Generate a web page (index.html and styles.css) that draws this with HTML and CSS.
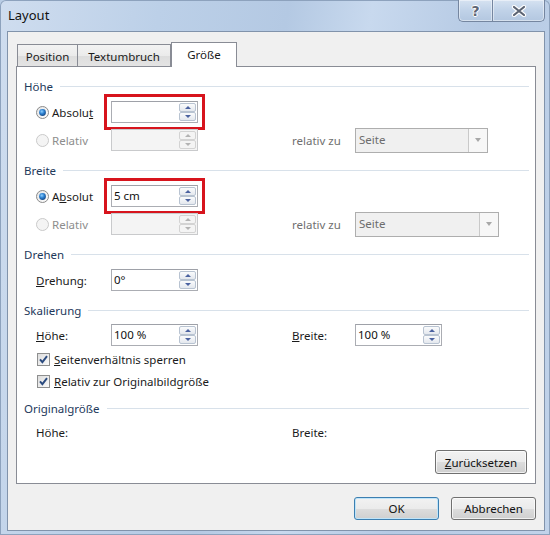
FILE: index.html
```html
<!DOCTYPE html>
<html lang="de">
<head>
<meta charset="utf-8">
<title>Layout</title>
<link rel="stylesheet" href="styles.css">
</head>
<body>
<div class="window">
  <div class="titlebar">
    <span class="title">Layout</span>
    <div class="caption">
      <span class="cbtn help">?</span>
      <span class="cbtn close"><svg width="16" height="12" viewBox="0 0 16 12"><path d="M3 2 L13 10 M13 2 L3 10" stroke="#fff" stroke-width="4.2" stroke-linecap="round"/><path d="M3 2 L13 10 M13 2 L3 10" stroke="#5b6372" stroke-width="2.2" stroke-linecap="round"/></svg></span>
    </div>
  </div>
  <div class="client">
    <div class="tabs">
      <div class="tab t1">Position</div>
      <div class="tab t2">Textumbruch</div>
      <div class="tab t3 active">Größe</div>
    </div>
    <div class="panel">
      <div class="group">
        <div class="ghead"><span>Höhe</span></div>
        <div class="row">
          <span class="opt"><svg class="radio" width="13" height="13" viewBox="0 0 13 13"><defs><radialGradient id="rb" cx="0.4" cy="0.35" r="0.7"><stop offset="0" stop-color="#8fd0ff"/><stop offset="0.5" stop-color="#2a7fd0"/><stop offset="1" stop-color="#17457f"/></radialGradient><linearGradient id="rw" x1="0" y1="0" x2="1" y2="1"><stop offset="0" stop-color="#e4e4e4"/><stop offset="1" stop-color="#ffffff"/></linearGradient></defs><circle cx="6.5" cy="6.5" r="6" fill="url(#rw)" stroke="#8a8a8a"/><circle cx="6.5" cy="6.5" r="3.4" fill="url(#rb)"/></svg><span>Absolu<u>t</u></span></span>
          <span class="hl"><span class="spin"><span class="val"></span><span class="arrows"><span class="ab up"></span><span class="ab dn"></span></span></span></span>
        </div>
        <div class="row">
          <span class="opt dis"><svg class="radio" width="13" height="13" viewBox="0 0 13 13"><circle cx="6.5" cy="6.5" r="6" fill="#f4f4f4" stroke="#c9c9c9"/></svg><span>Relativ</span></span>
          <span class="spin off"><span class="val"></span><span class="arrows"><span class="ab up"></span><span class="ab dn"></span></span></span>
          <span></span>
          <span class="lbl dis">relativ zu</span>
          <span class="select s1"><span class="sv">Seite</span><span class="sdrop"></span></span>
        </div>
      </div>
      <div class="group">
        <div class="ghead"><span>Breite</span></div>
        <div class="row">
          <span class="opt"><svg class="radio" width="13" height="13" viewBox="0 0 13 13"><circle cx="6.5" cy="6.5" r="6" fill="url(#rw)" stroke="#8a8a8a"/><circle cx="6.5" cy="6.5" r="3.4" fill="url(#rb)"/></svg><span>A<u>b</u>solut</span></span>
          <span class="hl"><span class="spin"><span class="val">5 cm</span><span class="arrows"><span class="ab up"></span><span class="ab dn"></span></span></span></span>
        </div>
        <div class="row">
          <span class="opt dis"><svg class="radio" width="13" height="13" viewBox="0 0 13 13"><circle cx="6.5" cy="6.5" r="6" fill="#f4f4f4" stroke="#c9c9c9"/></svg><span>Relativ</span></span>
          <span class="spin off"><span class="val"></span><span class="arrows"><span class="ab up"></span><span class="ab dn"></span></span></span>
          <span></span>
          <span class="lbl dis">relativ zu</span>
          <span class="select s2"><span class="sv">Seite</span><span class="sdrop"></span></span>
        </div>
      </div>
      <div class="group">
        <div class="ghead"><span>Drehen</span></div>
        <div class="row">
          <span class="lbl"><u>D</u>rehung:</span>
          <span class="spin"><span class="val">0°</span><span class="arrows"><span class="ab up"></span><span class="ab dn"></span></span></span>
        </div>
      </div>
      <div class="group">
        <div class="ghead"><span>Skalierung</span></div>
        <div class="row r26">
          <span class="lbl"><u>H</u>öhe:</span>
          <span class="spin"><span class="val">100 %</span><span class="arrows"><span class="ab up"></span><span class="ab dn"></span></span></span>
          <span></span>
          <span class="lbl"><u>B</u>reite:</span>
          <span class="spin"><span class="val">100 %</span><span class="arrows"><span class="ab up"></span><span class="ab dn"></span></span></span>
        </div>
        <div class="check"><svg width="13" height="13" viewBox="0 0 13 13"><defs><linearGradient id="cw" x1="0" y1="0" x2="1" y2="1"><stop offset="0" stop-color="#dcdcdc"/><stop offset="1" stop-color="#fbfbfb"/></linearGradient></defs><rect x="0.5" y="0.5" width="12" height="12" fill="url(#cw)" stroke="#8e8f8f"/><path d="M3 6.3 L5.4 9.2 L10 3.2" fill="none" stroke="#2b4b7f" stroke-width="1.9"/></svg><span><u>S</u>eitenverhältnis sperren</span></div>
        <div class="check"><svg width="13" height="13" viewBox="0 0 13 13"><rect x="0.5" y="0.5" width="12" height="12" fill="url(#cw)" stroke="#8e8f8f"/><path d="M3 6.3 L5.4 9.2 L10 3.2" fill="none" stroke="#2b4b7f" stroke-width="1.9"/></svg><span><u>R</u>elativ zur Originalbildgröße</span></div>
      </div>
      <div class="group last">
        <div class="ghead"><span>Originalgröße</span></div>
        <div class="row r24">
          <span class="lbl">Höhe:</span>
          <span></span>
          <span></span>
          <span class="lbl">Breite:</span>
        </div>
        <div class="panel-btns">
          <button class="btn reset"><u>Z</u>urücksetzen</button>
        </div>
      </div>
    </div>
    <div class="footer">
      <button class="btn default">OK</button>
      <button class="btn">Abbrechen</button>
    </div>
  </div>
</div>
</body>
</html>
```

FILE: styles.css
```css
html, body {
  margin: 0;
  padding: 0;
}
body {
  width: 550px;
  height: 535px;
  overflow: hidden;
  font-family: "Noto Sans", "Open Sans", sans-serif;
  font-size: 11.5px;
  color: #1b1b1b;
  background: #b9cde5;
}
u {
  text-decoration: underline;
  text-underline-offset: 1px;
}
.window {
  box-sizing: border-box;
  width: 550px;
  height: 535px;
  padding: 0 5px 4px 7px;
  display: flex;
  flex-direction: column;
  background: linear-gradient(100deg, #cfddef 0%, #bcd0e8 25%, #b4c9e3 45%, #c8d9ee 58%, #b6cae4 75%, #c1d3ea 100%);
  border-radius: 6px 6px 0 0;
  box-shadow: inset 0 0 0 1px #8da2bd;
}
.titlebar {
  height: 31px;
  display: flex;
  align-items: flex-start;
  flex-shrink: 0;
}
.title {
  font-size: 13px;
  color: #111;
  margin: 6px 0 0 1px;
  line-height: 19px;
}
.caption {
  margin-left: auto;
  display: flex;
}
.cbtn {
  box-sizing: border-box;
  height: 22px;
  display: flex;
  align-items: center;
  justify-content: center;
  border: 1px solid #7586a0;
  border-top: none;
  background: linear-gradient(#d6e2f1, #c0d2e8 50%, #b3c7e0);
  box-shadow: inset 0 0 0 1px rgba(255,255,255,0.45);
}
.help {
  width: 34px;
  border-radius: 0 0 0 5px;
  border-right: none;
  font-family: "DejaVu Sans", sans-serif;
  font-weight: bold;
  font-size: 14px;
  color: #5d6574;
  text-shadow: 1px 0 0 #fff, -1px 0 0 #fff, 0 1px 0 #fff, 0 -1px 0 #fff;
  padding-top: 1px;
}
.close {
  width: 53px;
  border-radius: 0 0 5px 0;
}
.client {
  flex: 1;
  display: flex;
  flex-direction: column;
  background: #f0f0f0;
  border: 1px solid #8193ab;
  padding: 10px 8px 10px 8px;
}
.tabs {
  display: flex;
  align-items: flex-end;
  height: 24px;
  padding-left: 1px;
}
.tab {
  box-sizing: border-box;
  height: 22px;
  border: 1px solid #898c95;
  border-bottom: none;
  background: linear-gradient(#f3f3f3, #ebebeb 50%, #dddddd 51%, #e4e4e4);
  color: #1b1b1b;
  display: flex;
  align-items: center;
  justify-content: center;
  padding-top: 1px;
}
.t1 { width: 61px; }
.t2 { width: 93px; border-left: none; }
.t3 { width: 66px; }
.tab.active {
  height: 25px;
  margin-bottom: -1px;
  background: #fff;
  position: relative;
  z-index: 1;
  border-left: 1px solid #898c95;
  padding-bottom: 2px;
}
.panel {
  background: #fff;
  border: 1px solid #898c95;
  padding: 9px 0 9px 0;
}
.group {
  margin-bottom: 6px;
}
.group.last { margin-bottom: 0; }
.ghead {
  height: 20px;
  display: flex;
  align-items: center;
  padding-left: 7px;
  margin-bottom: 2px;
  color: #1e395b;
}
.ghead::after {
  content: "";
  flex: 1;
  height: 1px;
  background: #d8e1ea;
  margin: 0 6px 0 7px;
}
.row {
  display: grid;
  grid-template-columns: 75px 87px 94px 63px auto;
  align-items: center;
  height: 28px;
  padding-left: 19px;
}
.row.r26 { height: 26px; }
.row.r24 { height: 24px; }
.opt {
  display: flex;
  align-items: center;
  gap: 3px;
}
.radio { flex-shrink: 0; }
.dis { color: #8d8d8d; }
.lbl { white-space: nowrap; }
.lbl.dis { color: #6f6f6f; }
.hl {
  display: block;
  width: 87px;
  outline: 3px solid #d7141d;
  outline-offset: 4px;
}
.spin {
  box-sizing: border-box;
  width: 87px;
  height: 22px;
  display: flex;
  border: 1px solid #abadb3;
  border-top-color: #9ea1a8;
  background: #fff;
}
.val {
  flex: 1;
  padding-left: 2px;
  line-height: 19px;
  color: #111;
}
.arrows {
  width: 17px;
  display: flex;
  flex-direction: column;
  padding: 1px 1px 1px 0;
}
.ab {
  flex: 1;
  box-sizing: border-box;
  border: 1px solid #b8c3d1;
  border-radius: 2px;
  background: linear-gradient(#fafbfc, #e4e8ee);
  display: flex;
  align-items: center;
  justify-content: center;
}
.ab + .ab { margin-top: 0; }
.up::before, .dn::before {
  content: "";
  width: 0;
  height: 0;
  border-left: 3px solid transparent;
  border-right: 3px solid transparent;
}
.up::before { border-bottom: 3px solid #4b62a0; }
.dn::before { border-top: 3px solid #4b62a0; }
.spin.off {
  background: #f4f4f4;
  border-color: #c9cacc;
}
.spin.off .ab {
  border-color: #d3d3d3;
  background: #f4f4f4;
}
.spin.off .up::before { border-bottom-color: #b3b3b3; }
.spin.off .dn::before { border-top-color: #b3b3b3; }
.select {
  box-sizing: border-box;
  height: 25px;
  display: flex;
  border: 1px solid #aeaeae;
  background: #f0f0f0;
  color: #6d6d6d;
}
.s1 { width: 133px; }
.s2 { width: 144px; }
.sv {
  flex: 1;
  padding-left: 3px;
  line-height: 22px;
}
.sdrop {
  width: 18px;
  border-left: 1px solid #c9c9c9;
  background: #f7f7f7;
  display: flex;
  align-items: center;
  justify-content: center;
}
.sdrop::before {
  content: "";
  border-left: 3.5px solid transparent;
  border-right: 3.5px solid transparent;
  border-top: 4px solid #a8a8a8;
}
.check {
  height: 22px;
  display: flex;
  align-items: center;
  gap: 4px;
  padding-left: 20px;
}
.check svg { flex-shrink: 0; }
.panel-btns {
  display: flex;
  justify-content: flex-end;
  padding-right: 8px;
  margin-top: 6px;
}
.btn {
  box-sizing: border-box;
  font-family: "Noto Sans", "Open Sans", sans-serif;
  font-size: 11.5px;
  color: #111;
  height: 23px;
  width: 85px;
  padding: 0;
  border: 1px solid #707070;
  border-radius: 3px;
  background: linear-gradient(#f2f2f2, #ebebeb 50%, #dddddd 51%, #cfcfcf);
  box-shadow: inset 0 0 0 1px rgba(255,255,255,0.7);
}
.btn.reset {
  width: 92px;
  height: 24px;
}
.btn.default {
  border-color: #3c7fb1;
  box-shadow: inset 0 0 0 1px #bfe4f9;
  background: linear-gradient(#eaf6fd, #d9f0fc 50%, #bee6fd 51%, #a7d9f5);
  background: linear-gradient(#f2f2f2, #ebebeb 50%, #dddddd 51%, #cfcfcf);
}
.footer {
  margin-top: auto;
  display: flex;
  justify-content: flex-end;
  gap: 12px;
}
```
